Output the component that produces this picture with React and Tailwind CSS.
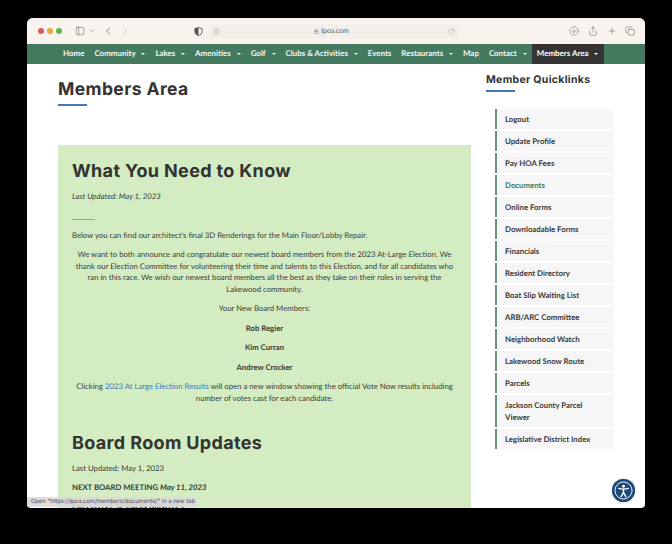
import React from "react";
import { ChevronLeft, ChevronRight, ChevronDown, Lock, RotateCw, CircleArrowDown, Share, Plus, Copy, PanelLeft, FileText } from "lucide-react";

const lato = { fontFamily: "Lato, 'Liberation Sans', sans-serif" };
const NAV = [
  ["Home", false], ["Community", true], ["Lakes", true], ["Amenities", true], ["Golf", true],
  ["Clubs & Activities", true], ["Events", false], ["Restaurants", true], ["Map", false], ["Contact", true],
];
const LINKS = ["Logout", "Update Profile", "Pay HOA Fees", "Documents", "Online Forms", "Downloadable Forms", "Financials", "Resident Directory", "Boat Slip Waiting List", "ARB/ARC Committee", "Neighborhood Watch", "Lakewood Snow Route", "Parcels", "Jackson County Parcel Viewer", "Legislative District Index"];

function Dot() {
  return <span className="ml-[5.800px] inline-block h-0 w-0 border-x-[2px] border-t-[2.500px] border-x-transparent border-t-current" />;
}

export default function App() {
  return (
    <div className="h-[544px] w-[672px] overflow-hidden bg-black pl-[27px] pt-[18px] [text-rendering:geometricPrecision]" style={lato}>
      <div className="relative flex h-[490px] w-[618px] flex-col overflow-hidden rounded-t-[6px] rounded-b-[4px] bg-white">
        {/* Browser toolbar */}
        <div className="flex h-[26px] shrink-0 items-center bg-[#f8f3ee] text-[#66625f]">
          <div className="ml-[11px] flex gap-[3px]">
            <span className="h-[6px] w-[6px] rounded-full bg-[#dd5a5a]" />
            <span className="h-[6px] w-[6px] rounded-full bg-[#e3aa3d]" />
            <span className="h-[6px] w-[6px] rounded-full bg-[#62b54f]" />
          </div>
          <PanelLeft size={10} strokeWidth={1.3} className="ml-[13px]" />
          <ChevronDown size={6} strokeWidth={2} className="ml-[4px]" />
          <ChevronLeft size={12} strokeWidth={1.5} className="ml-[7px]" />
          <ChevronRight size={12} strokeWidth={1.5} className="ml-[5px] text-[#c0bcb8]" />
          <svg width="9" height="9" viewBox="0 0 10 10" className="ml-[63px]">
            <path d="M5 .5 9 1.800V5c0 2.300-1.700 3.800-4 4.500C2.700 8.800 1 7.300 1 5V1.800Z" fill="none" stroke="#555" strokeWidth="1" />
            <path d="M5 .5V9.500C2.700 8.800 1 7.300 1 5V1.800Z" fill="#555" />
          </svg>
          <div className="ml-[7px] flex h-[13px] w-[248px] items-center rounded-[3px] bg-[#f3eee9] pl-[3px] pr-[3px] shadow-[0_0_1px_rgba(0,0,0,0.15)]">
            <FileText size={7} strokeWidth={1.2} className="text-[#a5a19d]" />
            <span className="flex flex-1 items-center justify-center gap-[2px] pr-[5px] text-[7px] leading-none text-[#5f5b58]">
              <Lock size={5} strokeWidth={2} />lpoa.com
            </span>
            <RotateCw size={7} strokeWidth={1.2} className="text-[#8c8884]" />
          </div>
          <CircleArrowDown size={10} strokeWidth={1.3} className="ml-[111px]" />
          <Share size={10} strokeWidth={1.3} className="ml-[9px]" />
          <Plus size={10} strokeWidth={1.3} className="ml-[9px]" />
          <Copy size={10} strokeWidth={1.3} className="ml-[8px]" />
        </div>

        {/* Site nav */}
        <nav className="flex h-[20px] shrink-0 items-stretch bg-[#447a60] pl-[36px] text-[7.950px] font-bold text-[#f3f7f4]">
          <div className="flex items-center gap-[10px]">
            {NAV.map(([label, arrow]) => (
              <span key={label} className="flex items-center whitespace-nowrap">{label}{arrow && <Dot />}</span>
            ))}
          </div>
          <div className="ml-[5px] flex w-[72px] items-center justify-center whitespace-nowrap bg-[#333333] text-white">Members Area<Dot /></div>
        </nav>

        {/* Page */}
        <div className="flex flex-1 items-start overflow-hidden pl-[31px]">
          <main className="w-[413px] shrink-0">
            <h1 className="mt-[14px] text-[17.500px] font-bold leading-[24px] tracking-[0.4px] text-[#333333]" style={{ fontFamily: "Inter, sans-serif" }}>Members Area</h1>
            <div className="mt-[2px] h-[2px] w-[29px] bg-[#3f78b8]" />
            <section className="mt-[39px] h-[400px] bg-[#d3ecc1] px-[14px] pt-[15px] text-[7.750px] leading-[11.500px] text-[#3a3a3a]">
              <h2 className="text-[18px] font-bold leading-[24px] tracking-[0.35px] text-[#333333]" style={{ fontFamily: "Inter, sans-serif" }}>What You Need to Know</h2>
              <p className="mt-[7px] italic">Last Updated: May 1, 2023</p>
              <div className="mt-[16px] h-px w-[23px] bg-[#9aa893]" />
              <p className="mt-[10px]">Below you can find our architect's final 3D Renderings for the Main Floor/Lobby Repair.</p>
              <p className="mt-[8px] text-center">We want to both announce and congratulate our newest board members from the 2023 At-Large Election. We thank our Election Committee for volunteering their time and talents to this Election, and for all candidates who ran in this race. We wish our newest board members all the best as they take on their roles in serving the Lakewood community.</p>
              <p className="mt-[8px] text-center">Your New Board Members:</p>
              <p className="mt-[8px] text-center font-bold">Rob Regier</p>
              <p className="mt-[8px] text-center font-bold">Kim Curran</p>
              <p className="mt-[8px] text-center font-bold">Andrew Crocker</p>
              <p className="mt-[8px] text-center">Clicking <span className="text-[#3f78b8]">2023 At Large Election Results</span> will open a new window showing the official Vote Now results including number of votes cast for each candidate.</p>
              <h2 className="mt-[28px] text-[18px] font-bold leading-[24px] tracking-[0.35px] text-[#333333]" style={{ fontFamily: "Inter, sans-serif" }}>Board Room Updates</h2>
              <p className="mt-[7px]">Last Updated: May 1, 2023</p>
              <p className="mt-[7px] font-bold">NEXT BOARD MEETING <em>May 11, 2023</em></p>
              <p className="mt-[8px] font-bold">EXECUTIVE SESSION MINUTES</p>
            </section>
          </main>
          <aside className="ml-[15px] w-[129px] shrink-0">
            <h3 className="mt-[9px] text-[10.500px] font-bold leading-[14px] tracking-[0.3px] text-[#333333]" style={{ fontFamily: "Inter, sans-serif" }}>Member Quicklinks</h3>
            <div className="mt-[3px] h-[1.500px] w-[29px] bg-[#3f78b8]" />
            <ul className="ml-[9px] mt-[17px] flex w-[119px] flex-col gap-[2px]">
              {LINKS.map((l) => (
                <li key={l} className={`border-l-[2px] border-[#6d8f80] bg-[#f6f6f6] py-[4px] pl-[8px] pr-[10px] text-[7.800px] font-bold leading-[12px] ${l === "Documents" ? "text-[#447a60]" : "text-[#3a3a3a]"}`}>{l}</li>
              ))}
            </ul>
          </aside>
        </div>

        {/* Overlays */}
        <div className="absolute bottom-[1px] left-0 flex h-[10px] w-[170px] items-center whitespace-nowrap rounded-r-[3px] bg-[#dcdadc]/90 pl-[4px] text-[5.800px] leading-none text-[#4a484a]" style={{ fontFamily: "Inter, sans-serif" }}>
          Open "https://lpoa.com/members/documents/" in a new tab
        </div>
        <div className="absolute bottom-[6px] right-[10px] flex h-[23px] w-[23px] items-center justify-center rounded-full bg-[#1a4a7a] shadow-[0_0_1px_#0008]">
          <svg width="19" height="19" viewBox="0 0 20 20" fill="none" stroke="white">
            <circle cx="10" cy="10" r="9" strokeWidth="1" />
            <circle cx="10" cy="5.500" r="1.500" fill="white" stroke="none" />
            <path d="M5 7.800c3.400 1 6.600 1 10 0M10 8.500v3.500M10 12l-2.500 4.500M10 12l2.500 4.500" strokeWidth="1.500" strokeLinecap="round" />
          </svg>
        </div>
      </div>
    </div>
  );
}
